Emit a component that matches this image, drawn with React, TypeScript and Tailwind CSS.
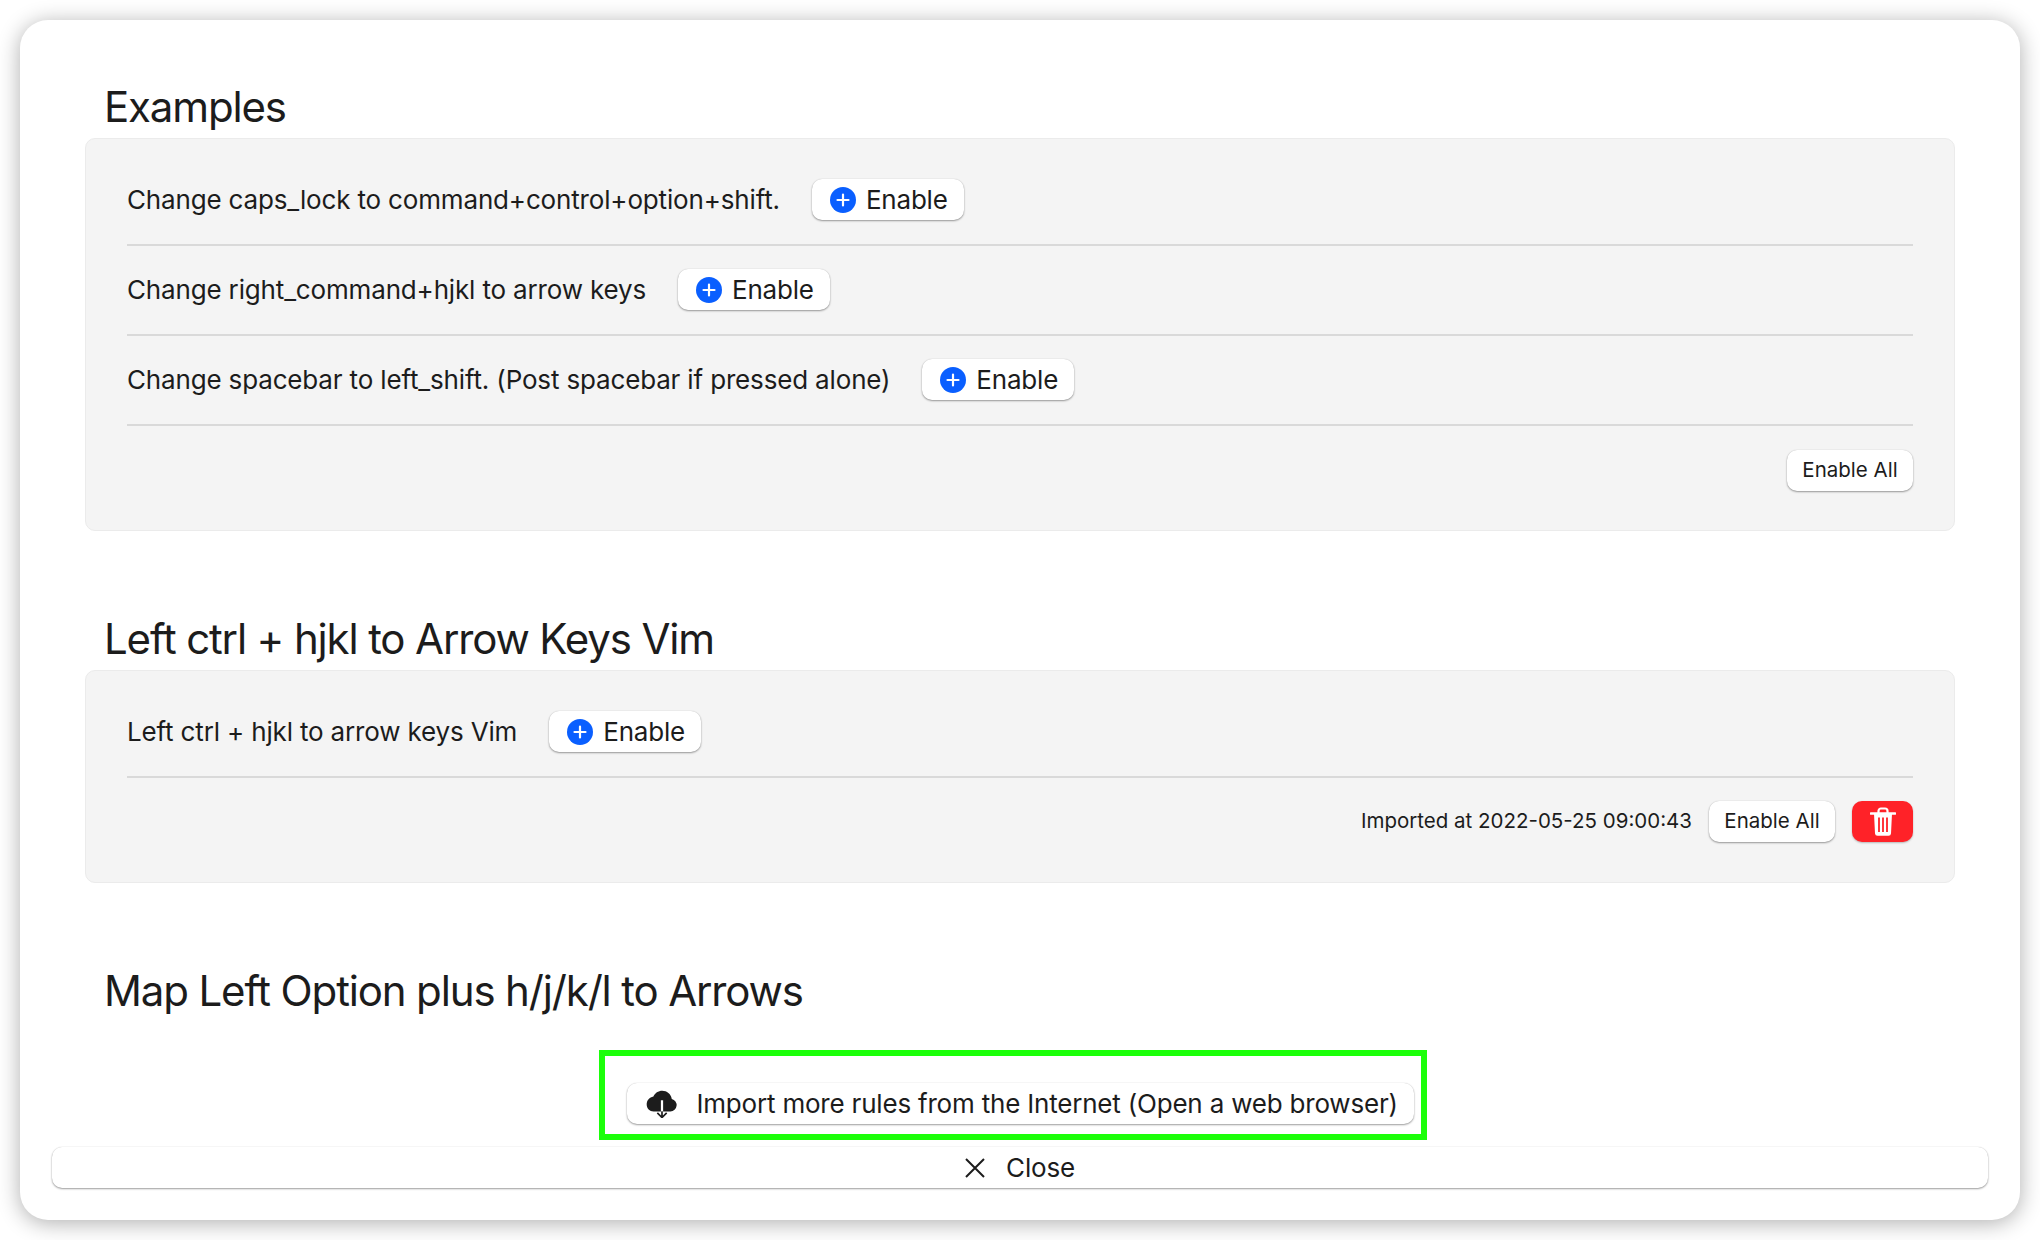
import React from "react";

const btn =
  "flex items-center bg-white rounded-[10px] shadow-[0_1px_2px_rgba(0,0,0,0.38),0_0_1px_rgba(0,0,0,0.18)] text-[#1c1c1c] shrink-0";

function PlusCircle() {
  return (
    <svg width="26" height="26" viewBox="0 0 26 26" className="shrink-0">
      <circle cx="13" cy="13" r="13" fill="#0a5fff" />
      <path d="M13 7.5v11M7.5 13h11" stroke="#fff" strokeWidth="2.2" strokeLinecap="round" />
    </svg>
  );
}

function EnableButton() {
  return (
    <button className={`${btn} h-[41px] w-[152px] pl-[18px] gap-[10px] text-[26px] tracking-[-0.2px]`}>
      <PlusCircle />
      <span>Enable</span>
    </button>
  );
}

function EnableAll() {
  return <button className={`${btn} justify-center h-[41px] w-[126px] text-[20.5px]`}>Enable All</button>;
}

function Trash() {
  return (
    <svg width="26" height="30" viewBox="0 0 26 30" fill="none">
      <path d="M1 6.5h24" stroke="#fff" strokeWidth="2.6" strokeLinecap="round" />
      <path d="M8.5 6V4a2.5 2.5 0 0 1 2.5-2.5h4A2.5 2.5 0 0 1 17.5 4v2" stroke="#fff" strokeWidth="2.2" />
      <path d="M4 6.5l1 20a2.5 2.5 0 0 0 2.5 2.3h11a2.5 2.5 0 0 0 2.5-2.3l1-20" fill="#fff" />
      <path d="M9 10.5v14.5M13 10.5v14.5M17 10.5v14.5" stroke="#ff2228" strokeWidth="1.8" />
    </svg>
  );
}

function CloudDown() {
  return (
    <svg width="32" height="28" viewBox="0 0 34 30" className="shrink-0">
      <path
        d="M8 23h18a6.8 6.8 0 0 0 1.5-13.4C26.5 4 22.2 0.8 17.3 0.8c-4.3 0-8 2.4-9.5 6.2C3.6 7.9 0.6 11 0.6 15.5c0 4.3 3.2 7.5 7.4 7.5z"
        fill="#1c1c1c"
      />
      <path d="M17 11v12" stroke="#fff" strokeWidth="2.4" />
      <path d="M17 23v6M12 24.5l5 5 5-5" stroke="#1c1c1c" strokeWidth="1.8" fill="none" />
    </svg>
  );
}

function CloseX() {
  return (
    <svg width="20" height="20" viewBox="0 0 20 20" className="shrink-0">
      <path d="M1 1l18 18M19 1L1 19" stroke="#1c1c1c" strokeWidth="2" />
    </svg>
  );
}

function Row({ label }: { label: string }) {
  return (
    <div className="flex items-center gap-[32px] h-[41px] mb-[24px] mt-[23px] first:mt-0">
      <span className="text-[26px] tracking-[-0.16px]">{label}</span>
      <EnableButton />
    </div>
  );
}

function Divider() {
  return <div className="h-[2px] bg-[#d9d9d9]" />;
}

function Heading({ children }: { children: React.ReactNode }) {
  return (
    <h2 className="h-[62px] pl-[19px] pb-[2px] flex items-center text-[42px] tracking-[-1.15px] text-[#1c1c1c]">
      {children}
    </h2>
  );
}

export default function App() {
  return (
    <div
      className="w-[2040px] h-[1240px] bg-white p-[20px] text-[#1c1c1c]"
      style={{ fontFamily: "Inter, 'Liberation Sans', sans-serif" }}
    >
      <div className="h-[1200px] bg-white rounded-[28px] shadow-[0_3px_22px_rgba(0,0,0,0.32)] px-[32px] pb-[32px] pt-[56px] flex flex-col">
        <div className="px-[33px] flex-1 flex flex-col">
          <Heading>Examples</Heading>
          <section className="h-[393px] bg-[#f4f4f4] border border-[#ebebeb] rounded-[10px] px-[41px] pt-[40px]">
            <Row label="Change caps_lock to command+control+option+shift." />
            <Divider />
            <Row label="Change right_command+hjkl to arrow keys" />
            <Divider />
            <Row label="Change spacebar to left_shift. (Post spacebar if pressed alone)" />
            <Divider />
            <div className="flex justify-end mt-[24px]">
              <EnableAll />
            </div>
          </section>

          <div className="mt-[77px]">
            <Heading>Left ctrl + hjkl to Arrow Keys Vim</Heading>
          </div>
          <section className="h-[213px] bg-[#f4f4f4] border border-[#ebebeb] rounded-[10px] px-[41px] pt-[40px]">
            <Row label="Left ctrl + hjkl to arrow keys Vim" />
            <Divider />
            <div className="flex justify-end items-center mt-[23px] gap-[17px]">
              <span className="text-[20.5px]">Imported at 2022-05-25 09:00:43</span>
              <EnableAll />
              <button className="w-[61px] h-[41px] rounded-[10px] bg-[#ff2228] flex items-center justify-center shadow-[0_1px_2px_rgba(0,0,0,0.25)]">
                <Trash />
              </button>
            </div>
          </section>

          <div className="mt-[77px]">
            <Heading>Map Left Option plus h/j/k/l to Arrows</Heading>
          </div>

          <div className="flex justify-center mt-[61px]">
            <div className="relative flex">
              <button className={`${btn} h-[41px] w-[787px] pl-[19px] gap-[19px] text-[26px] tracking-[-0.2px]`}>
                <CloudDown />
                <span>Import more rules from the Internet (Open a web browser)</span>
              </button>
              <div className="absolute left-[-28px] top-[-33px] w-[828px] h-[90px] border-[6px] border-[#1cff0a] pointer-events-none" />
            </div>
          </div>
        </div>

        <button className={`${btn} justify-center h-[41px] w-full gap-[21px] text-[26px] tracking-[-0.2px] mt-[23px]`}>
          <CloseX />
          <span>Close</span>
        </button>
      </div>
    </div>
  );
}
